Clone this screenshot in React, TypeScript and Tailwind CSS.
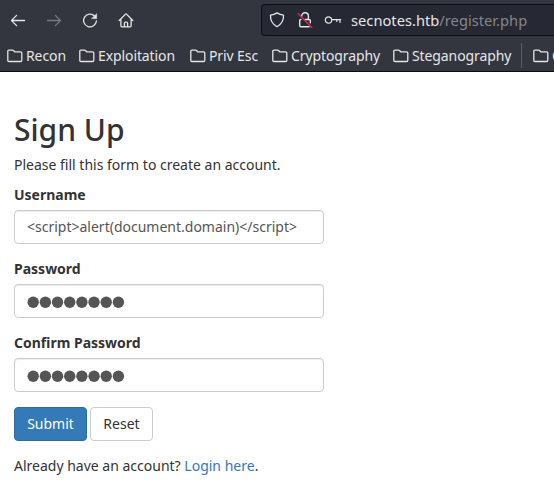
import React from "react";

const stroke = { fill: "none", stroke: "currentColor", strokeLinecap: "round", strokeLinejoin: "round" } as const;

function Folder() {
  return (
    <svg className="h-4 w-4 shrink-0" viewBox="0 0 16 16" strokeWidth="1.3" {...stroke}>
      <path d="M2 2.1h3.6c.4 0 .6.1.9.4l1.2 1.300h5.900c.8 0 1.200.4 1.200 1.200v7.300c0 .8-.4 1.200-1.200 1.200H2c-.8 0-1.200-.4-1.200-1.200V3.300c0-.8.4-1.200 1.200-1.200z" />
    </svg>
  );
}

function Bookmark({ label, width }: { label: string; width: string }) {
  return (
    <div className={`flex shrink-0 items-center gap-[3px] ${width}`}>
      <Folder />
      <span className="mt-px whitespace-nowrap tracking-[-0.1px]">{label}</span>
    </div>
  );
}

function Browser() {
  return (
    <header className="h-[72px] overflow-hidden border-b border-[#0c0c0f] bg-[#33363e] text-[#e6e6e8]">
      <div className="flex h-10 items-center">
        <nav className="flex w-[261px] shrink-0 items-center gap-5 pl-[10px]">
          <svg className="h-4 w-4" viewBox="0 0 16 16" strokeWidth="1.3" {...stroke}>
            <path d="M14.500 8.500h-13M6.600 3.400 1.500 8.500l5.100 5.100" />
          </svg>
          <svg className="h-4 w-4 text-[#777980]" viewBox="0 0 16 16" strokeWidth="1.3" {...stroke}>
            <path d="M1.500 8.500h13M9.400 3.400l5.100 5.100-5.100 5.100" />
          </svg>
          <svg className="h-4 w-4" viewBox="0 0 16 16" strokeWidth="1.300" {...stroke}>
            <path d="M12.600 4A6.400 6.400 0 1 0 14.400 9" />
            <path d="M14.600 2v4.600H10z" fill="currentColor" strokeWidth=".6" />
          </svg>
          <svg className="h-4 w-4" viewBox="0 0 16 16" strokeWidth="1.300" {...stroke}>
            <path d="M1.200 8.500 7.500 2.100c.3-.3.700-.3 1 0l6.300 6.400M2.900 7v6.700c0 .7.400 1.100 1.100 1.100h8c.7 0 1.100-.4 1.100-1.100V7M6.400 14.600v-3.500c0-.6.4-1 1-1h1.200c.6 0 1 .4 1 1v3.500" />
          </svg>
        </nav>
        <div className="flex h-8 flex-1 items-center rounded-l border border-r-0 border-[#0d0e12] bg-[#262833] pl-[7px]">
          <svg className="h-4 w-4 shrink-0" viewBox="0 0 16 16" strokeWidth="1.3" {...stroke}>
            <path d="M8 .9c2 1.300 4.100 2 6.500 2.200.3 5.400-2.300 9.200-6.500 11.600C3.800 12.300 1.200 8.500 1.500 3.100 3.900 2.900 6 2.200 8 .9z" />
          </svg>
          <svg className="ml-3 h-4 w-4 shrink-0 overflow-visible" viewBox="0 0 16 16" strokeWidth="1.4" {...stroke}>
            <path d="M4.700 4.300C4.700 2.100 6.100.8 8 .8s3.400 1.300 3.400 3.300v3.200M8 7.500h4.100c.8 0 1.200.4 1.200 1.200v2M3.900 7.500c-.8 0-1.200.4-1.200 1.200v4.800c0 .8.4 1.200 1.200 1.200h8.200" />
            <path className="text-[#e2264d]" d="m1 1.600 13.800 13.800" stroke="currentColor" strokeWidth="1.400" />
          </svg>
          <svg className="ml-3 h-4 w-4 shrink-0 overflow-visible" viewBox="0 0 16 16" strokeWidth="1.2" {...stroke}>
            <circle cx="3.500" cy="8" r="3.200" />
            <path d="M6.900 7.600h8.800M15 7.800v2.600M11.800 7.800v1.700" />
          </svg>
          <span className="ml-[10px] whitespace-nowrap text-[14.667px] leading-5 tracking-[0.02px]">
            secnotes.htb<span className="text-[#85868c]">/register.php</span>
          </span>
        </div>
      </div>
      <div className="flex h-[31px] items-center pl-[7px] text-sm leading-5">
        <Bookmark label="Recon" width="w-[72px]" />
        <Bookmark label="Exploitation" width="w-[111px]" />
        <Bookmark label="Priv Esc" width="w-[82px]" />
        <Bookmark label="Cryptography" width="w-[121px]" />
        <Bookmark label="Steganography" width="w-[128px]" />
        <div className="mr-[11px] h-[25px] w-px shrink-0 bg-[#5b5d64]" />
        <Bookmark label="C" width="w-[60px]" />
      </div>
    </header>
  );
}

function Field({ label, value, password = false }: { label: string; value: string; password?: boolean }) {
  return (
    <label className="mb-[15px] block">
      <span className="mb-[5px] block font-bold">{label}</span>
      <span className="flex h-[34px] w-[310px] items-center rounded border border-[#ccc] px-3 text-[#555] shadow-[inset_0_1px_1px_rgba(0,0,0,0.075)]">
        {password ? (
          <svg className="mt-[2px] h-3 w-[98px] fill-[#555]" viewBox="0 0 98 12">
            {Array.from(value, (_, i) => (
              <circle key={i} cx={6.2 + i * 12.17} cy="6.2" r="5.7" />
            ))}
          </svg>
        ) : (
          value
        )}
      </span>
    </label>
  );
}

export default function App() {
  return (
    <div className="h-[485px] overflow-hidden bg-white font-['Noto_Sans','Open_Sans',sans-serif]">
      <Browser />
      <main className="px-[14px] pt-[41px] text-sm leading-5 text-[#333]">
        <h2 className="mb-[9px] text-[30px] font-medium leading-[33px]">Sign Up</h2>
        <p className="mb-[10px]">Please fill this form to create an account.</p>
        <form>
          <Field label="Username" value="<script>alert(document.domain)</script>" />
          <Field label="Password" value="password" password />
          <Field label="Confirm Password" value="password" password />
          <div className="mb-[15px] flex gap-[3px]">
            <button type="button" className="h-[34px] w-[73px] rounded border border-[#2e6da4] bg-[#337ab7] text-white">Submit</button>
            <button type="button" className="h-[34px] w-[63px] rounded border border-[#ccc] bg-white">Reset</button>
          </div>
          <p>
            Already have an account? <a className="text-[#337ab7]">Login here</a>.
          </p>
        </form>
      </main>
    </div>
  );
}
